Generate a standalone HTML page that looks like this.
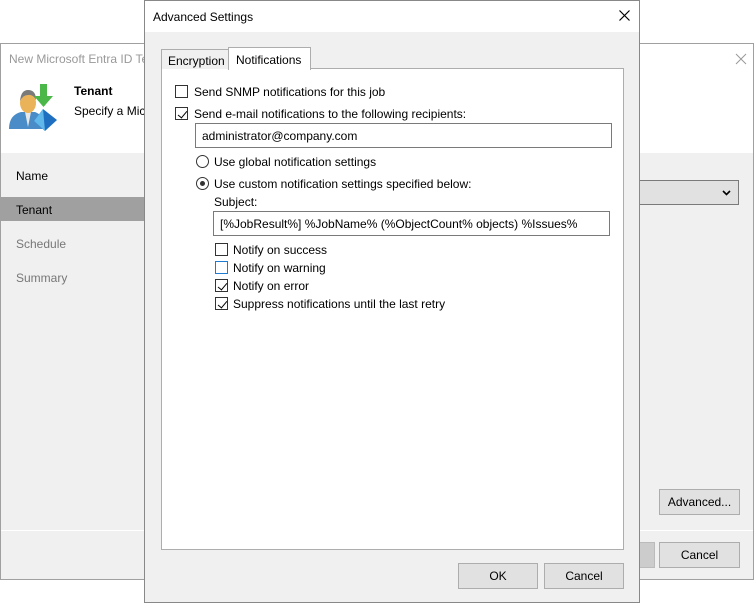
<!DOCTYPE html>
<html><head><style>
*{box-sizing:border-box;margin:0;padding:0}
body{width:754px;height:603px;background:#fff;position:relative;overflow:hidden;font-family:"Segoe UI","Liberation Sans",sans-serif;font-size:12px;color:#000}
.a{position:absolute}
.btn{position:absolute;background:#e1e1e1;border:1px solid #adadad;text-align:center;line-height:24px;font-size:12px}
.cb{position:absolute;width:13px;height:13px;border:1px solid #333;background:#fff}
.cb.c::after{content:"";position:absolute;left:3.5px;top:0.5px;width:4px;height:8px;border:solid #000;border-width:0 1.3px 1.3px 0;transform:rotate(40deg)}
.rb{position:absolute;width:13px;height:13px;border:1px solid #333;border-radius:50%;background:#fff}
.t{position:absolute;white-space:nowrap;font-size:12px}
</style></head><body>
<div class="a" style="left:0;top:43px;width:754px;height:537px;border:1px solid #a0a0a0;background:#f0f0f0">
 <div class="a" style="left:0;top:0;width:752px;height:109px;background:#fff"></div>
 <div class="t" style="left:8px;top:8px;color:#999">New Microsoft Entra ID Te</div>
 <svg class="a" style="left:734px;top:9px" width="12" height="12" viewBox="0 0 12 12"><path d="M1 1L11 11M11 1L1 11" stroke="#999" stroke-width="1"/></svg>
 <svg class="a" style="left:6px;top:35px" width="55" height="55" viewBox="0 0 55 55">
  <path d="M2 50 Q2 36 14 33 L28 33 Q36 36 38 44 L38 50Z" fill="#4a8cc7"/>
  <path d="M18 33 L21 48 L24 33Z" fill="#e7e7e7"/>
  <ellipse cx="21" cy="24" rx="8" ry="10" fill="#eab35a"/>
  <path d="M13 22 Q14 11 21 11 Q29 11 29 21 Q26 15 21 16 Q16 16 13 22Z" fill="#7a7a7a"/>
  <path d="M33 5 H40 V17 H46 L36.5 28 L27 17 H33Z" fill="#4bb748"/>
  <path d="M36 30 L50 41 L38 52 L27 42Z" fill="#1e6fbf"/>
  <path d="M36 30 L38 52 L27 42Z" fill="#5fb7ea"/>
 </svg>
 <div class="t" style="left:73px;top:40px;font-weight:bold">Tenant</div>
 <div class="t" style="left:73px;top:60px">Specify a Mic</div>
 <div class="a" style="left:0;top:153px;width:143px;height:24px;background:#a0a0a0"></div>
 <div class="t" style="left:15px;top:125px">Name</div>
 <div class="t" style="left:15px;top:159px">Tenant</div>
 <div class="t" style="left:15px;top:193px;color:#777">Schedule</div>
 <div class="t" style="left:15px;top:227px;color:#777">Summary</div>
 <div class="a" style="left:638px;top:136px;width:100px;height:25px;background:#e1e1e1;border:1px solid #7a7a7a"></div>
 <svg class="a" style="left:721px;top:146px" width="9" height="6" viewBox="0 0 9 6"><path d="M1 1L4.5 4.5L8 1" stroke="#000" stroke-width="1.6" fill="none"/></svg>
 <div class="a" style="left:0;top:486px;width:752px;height:1px;background:#fff"></div>
 <div class="btn" style="left:658px;top:445px;width:81px;height:26px">Advanced...</div>
 <div class="a" style="left:600px;top:498px;width:54px;height:26px;background:#cccccc;border:1px solid #bbb"></div>
 <div class="btn" style="left:658px;top:498px;width:81px;height:26px">Cancel</div>
</div>
<div class="a" style="left:144px;top:0;width:496px;height:603px;border:1px solid #888;background:#f0f0f0">
 <div class="a" style="left:0;top:0;width:494px;height:31px;background:#fff"></div>
 <div class="t" style="left:8px;top:9px">Advanced Settings</div>
 <svg class="a" style="left:474px;top:9px" width="11" height="11" viewBox="0 0 11 11"><path d="M0.5 0.5L10.5 10.5M10.5 0.5L0.5 10.5" stroke="#000" stroke-width="1.2"/></svg>
 <div class="a" style="left:16px;top:67px;width:463px;height:482px;background:#fff;border:1px solid #adadad"></div>
 <div class="a" style="left:16px;top:48px;width:68px;height:20px;background:#f0f0f0;border:1px solid #adadad;border-bottom:none"></div>
 <div class="t" style="left:23px;top:53px">Encryption</div>
 <div class="a" style="left:83px;top:46px;width:83px;height:23px;background:#fff;border:1px solid #adadad;border-bottom:none"></div>
 <div class="t" style="left:91px;top:52px">Notifications</div>
 <div class="cb" style="left:30px;top:84px"></div><div class="t" style="left:49px;top:84px">Send SNMP notifications for this job</div>
 <div class="cb c" style="left:30px;top:106px"></div><div class="t" style="left:49px;top:106px">Send e-mail notifications to the following recipients:</div>
 <div class="a" style="left:50px;top:122px;width:417px;height:25px;border:1px solid #7a7a7a;background:#fff"></div>
 <div class="t" style="left:57px;top:128px">administrator@company.com</div>
 <div class="rb" style="left:51px;top:154px"></div><div class="t" style="left:69px;top:154px">Use global notification settings</div>
 <div class="rb" style="left:51px;top:176px"></div><div class="a" style="left:55px;top:180px;width:5px;height:5px;border-radius:50%;background:#333"></div>
 <div class="t" style="left:69px;top:176px">Use custom notification settings specified below:</div>
 <div class="t" style="left:69px;top:194px">Subject:</div>
 <div class="a" style="left:68px;top:210px;width:397px;height:25px;border:1px solid #7a7a7a;background:#fff"></div>
 <div class="t" style="left:75px;top:216px">[%JobResult%] %JobName% (%ObjectCount% objects) %Issues%</div>
 <div class="cb" style="left:70px;top:242px"></div><div class="t" style="left:88px;top:242px">Notify on success</div>
 <div class="cb" style="left:70px;top:260px;border:1px solid #1f7ad1"></div><div class="t" style="left:88px;top:260px">Notify on warning</div>
 <div class="cb c" style="left:70px;top:278px"></div><div class="t" style="left:88px;top:278px">Notify on error</div>
 <div class="cb c" style="left:70px;top:296px"></div><div class="t" style="left:88px;top:296px">Suppress notifications until the last retry</div>
 <div class="btn" style="left:313px;top:562px;width:80px;height:26px">OK</div>
 <div class="btn" style="left:399px;top:562px;width:80px;height:26px">Cancel</div>
</div>
</body></html>
